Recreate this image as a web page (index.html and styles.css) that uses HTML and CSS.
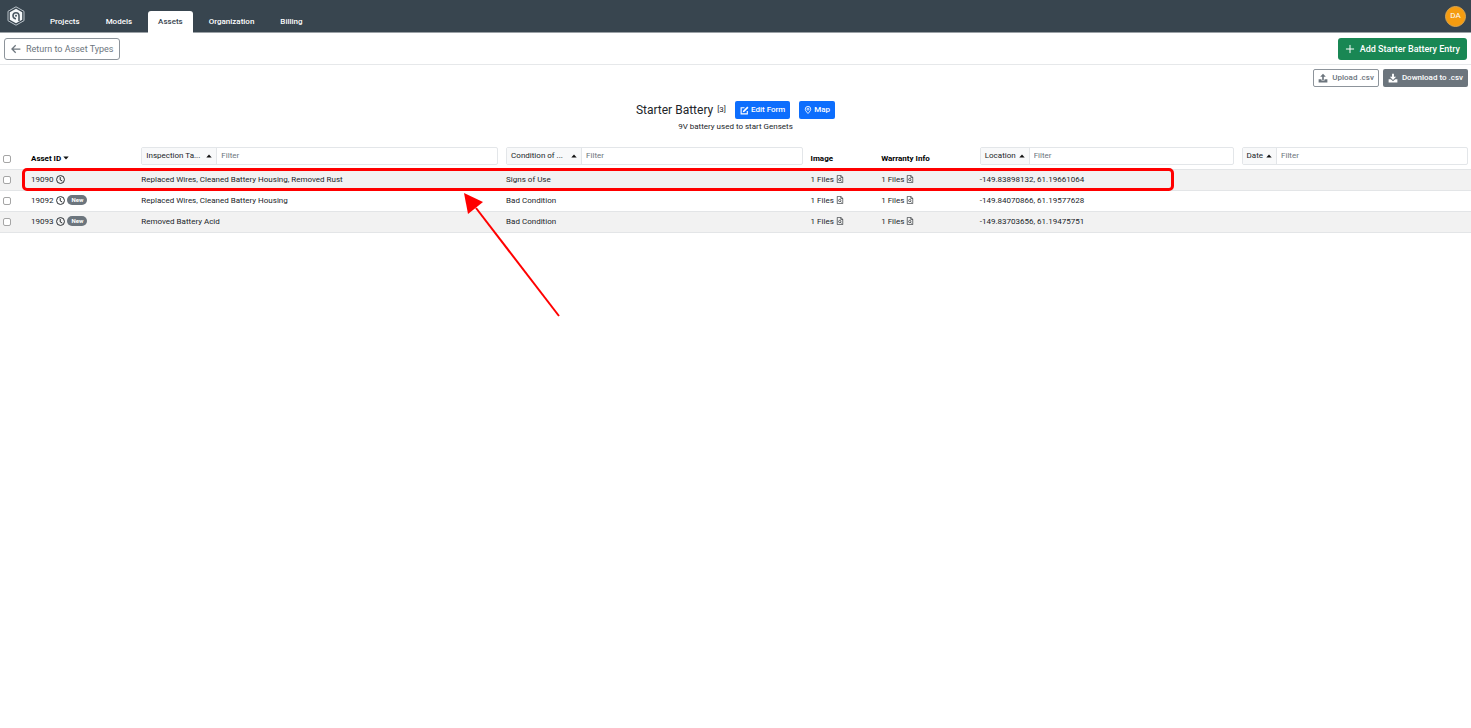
FILE: index.html
```html
<!DOCTYPE html>
<html lang="en">
<head>
<meta charset="utf-8">
<title>Starter Battery assets</title>
<link rel="stylesheet" href="styles.css">
</head>
<body>
<svg class="sprite" aria-hidden="true">
  <symbol id="clock" viewBox="0 0 16 16"><circle cx="8" cy="8" r="7" fill="none" stroke="currentColor" stroke-width="1.700"/><path d="M7.500 3.500v5.300l3.700 2" fill="none" stroke="currentColor" stroke-width="1.700"/></symbol>
  <symbol id="file" viewBox="0 0 16 16"><path fill="none" stroke="currentColor" stroke-width="1.300" d="M2.500.8h7L13.500 4.500v10.700h-11zM9.500.8v4h4"/><circle cx="7.500" cy="9" r="2.300" fill="none" stroke="currentColor" stroke-width="1.300"/><path stroke="currentColor" stroke-width="1.300" d="M9 10.700l2 2.300"/></symbol>
  <symbol id="up" viewBox="0 0 10 6"><path d="M5 .5 9.500 5.500H.5z"/></symbol>
  <symbol id="down" viewBox="0 0 10 6"><path d="M5 5.500 9.500.5H.5z"/></symbol>
</svg>
<header class="topbar">
  <a class="logo" href="#" aria-label="Home">
    <svg class="line" viewBox="0 0 20 20"><path d="M10 .8 18 5.300v9.400L10 19.200 2 14.700V5.300z" stroke="#b9c2c9" stroke-width="1"/><path d="M10 2.800 16.200 6.300v7.400L10 17.200l-6.200-3.500V6.300z" fill="#f5f8fa"/><path d="M13 15V9.800a3 3 0 1 0-3 3" stroke="#4a5863" stroke-width="1.600"/><circle cx="10" cy="9.800" r="1" fill="#4a5863"/></svg>
  </a>
  <nav class="tabs">
    <a class="tab" href="#">Projects</a>
    <a class="tab" href="#">Models</a>
    <a class="tab active" href="#" aria-current="page">Assets</a>
    <a class="tab" href="#">Organization</a>
    <a class="tab" href="#">Billing</a>
  </nav>
  <button class="avatar" type="button">DA</button>
</header>
<div class="actions">
  <button class="btn btn-lg btn-outline" type="button"><svg class="ico10 line" viewBox="0 0 16 16" stroke="currentColor" stroke-width="2"><path d="M15 8H2M7.500 2 1.500 8l6 6"/></svg>Return to Asset Types</button>
  <button class="btn btn-lg btn-green" type="button"><svg class="ico10 line" viewBox="0 0 16 16" stroke="currentColor" stroke-width="1.600"><path d="M8 1.500v13M1.500 8h13"/></svg>Add Starter Battery Entry</button>
</div>
<div class="csv">
  <button class="btn btn-outline" type="button"><svg class="ico10" viewBox="0 0 16 16"><path d="M8 1l4.500 4.800H9.300V11H6.700V5.800H3.500z"/><path d="M1 10h4.500v2h5v-2H15v5H1z"/></svg>Upload .csv</button>
  <button class="btn btn-grey" type="button"><svg class="ico10" viewBox="0 0 16 16"><path d="M6.500 1h3v5H13L8 11 3 6h3.500z"/><path d="M1 10h3.500L8 13l3.500-3H15v5H1z"/></svg>Download to .csv</button>
</div>
<section class="heading">
  <div class="title-row">
    <h1>Starter Battery</h1><span class="count">[3]</span>
    <button class="btn btn-blue" type="button"><svg class="ico9 line" viewBox="0 0 16 16" stroke="currentColor"><path stroke-width="2" d="M8 3H2v11h11V9"/><path stroke-width="3" d="M7 9 14 2"/><path fill="currentColor" stroke="none" d="M5 11l.6-3.500L8.500 10.400z"/></svg>Edit Form</button>
    <button class="btn btn-blue" type="button"><svg class="ico8 line" viewBox="0 0 16 16" stroke="currentColor" stroke-width="1.700"><path d="M8 15C4 10.500 2.500 8.500 2.500 6.300a5.500 5.500 0 0 1 11 0C13.500 8.500 12 10.500 8 15z"/><circle cx="8" cy="6.300" r="2"/></svg>Map</button>
  </div>
  <p>9V battery used to start Gensets</p>
</section>
<main class="grid">
<table>
  <colgroup><col class="c-check"><col class="c-id"><col class="c-tasks"><col class="c-cond"><col class="c-image"><col class="c-warranty"><col class="c-loc"><col class="c-date"></colgroup>
  <thead><tr>
    <th><input type="checkbox" aria-label="Select all"></th>
    <th>Asset ID <svg class="caret"><use href="#down"/></svg></th>
    <th><div class="filter"><button class="tag tag-wide" type="button">Inspection Ta... <svg class="caret"><use href="#up"/></svg></button><input type="text" placeholder="Filter" aria-label="Filter inspection tasks"></div></th>
    <th><div class="filter"><button class="tag tag-wide" type="button">Condition of ... <svg class="caret"><use href="#up"/></svg></button><input type="text" placeholder="Filter" aria-label="Filter condition"></div></th>
    <th>Image</th>
    <th>Warranty Info</th>
    <th><div class="filter"><button class="tag" type="button">Location <svg class="caret"><use href="#up"/></svg></button><input type="text" placeholder="Filter" aria-label="Filter location"></div></th>
    <th><div class="filter"><button class="tag" type="button">Date <svg class="caret"><use href="#up"/></svg></button><input type="text" placeholder="Filter" aria-label="Filter date"></div></th>
  </tr></thead>
  <tbody>
  <tr><td><input type="checkbox" aria-label="Select 19090"></td><td>19090 <svg class="mini clock"><use href="#clock"/></svg></td><td>Replaced Wires, Cleaned Battery Housing, Removed Rust</td><td>Signs of Use</td><td>1 Files <svg class="mini"><use href="#file"/></svg></td><td>1 Files <svg class="mini"><use href="#file"/></svg></td><td>-149.83898132, 61.19661064</td><td></td></tr>
  <tr><td><input type="checkbox" aria-label="Select 19092"></td><td>19092 <svg class="mini clock"><use href="#clock"/></svg> <span class="badge">New</span></td><td>Replaced Wires, Cleaned Battery Housing</td><td>Bad Condition</td><td>1 Files <svg class="mini"><use href="#file"/></svg></td><td>1 Files <svg class="mini"><use href="#file"/></svg></td><td>-149.84070866, 61.19577628</td><td></td></tr>
  <tr><td><input type="checkbox" aria-label="Select 19093"></td><td>19093 <svg class="mini clock"><use href="#clock"/></svg> <span class="badge">New</span></td><td>Removed Battery Acid</td><td>Bad Condition</td><td>1 Files <svg class="mini"><use href="#file"/></svg></td><td>1 Files <svg class="mini"><use href="#file"/></svg></td><td>-149.83703656, 61.19475751</td><td></td></tr>
  </tbody>
</table>
<div class="callout"></div>
<svg class="arrow" viewBox="0 0 96 124" aria-hidden="true"><path d="M95 123 12 15" stroke="#f00" stroke-width="2"/><path d="M0 0 19 9 4 21z" fill="#f00"/></svg>
</main>
</body>
</html>
```

FILE: styles.css
```css
* { box-sizing: border-box; }
body { margin: 0; min-height: 100vh; display: flex; flex-direction: column; background: #fff; color: #212529; font-family: Roboto, "Liberation Sans", sans-serif; font-size: 8px; line-height: 12px; }
button, input { font: inherit; color: inherit; margin: 0; }
button { cursor: pointer; }
svg { fill: currentColor; flex: none; }
.line { fill: none; }
.sprite { position: absolute; width: 0; height: 0; }

.topbar { display: flex; align-items: flex-end; height: 33px; background: #38454f; border-bottom: 1px solid #9ba1a6; padding-right: 5px; }
.logo { align-self: center; margin-left: 6px; width: 20px; height: 20px; }
.logo svg { display: block; width: 20px; height: 20px; }
.tabs { display: flex; gap: 6px; margin-left: 14px; margin-bottom: -1px; }
.tab { padding: 0 10px; height: 22px; line-height: 21px; font-weight: 500; color: #fff; text-decoration: none; border-radius: 3px 3px 0 0; }
.tab.active { background: #fff; color: #38454f; }
.avatar { margin-left: auto; align-self: center; width: 21px; height: 21px; padding: 0; border: 1px solid #d9a650; border-radius: 50%; background: #f59c10; color: #fff; }

.btn { display: inline-flex; align-items: center; gap: 4px; height: 18px; padding: 0 4px; border: 1px solid transparent; border-radius: 2px; font-weight: 500; color: #fff; white-space: nowrap; }
.btn-lg { gap: 5px; height: 22px; padding: 0 6px; font-size: 9px; font-weight: 400; border-radius: 3px; }
.btn-outline { background: #fff; color: #6c757d; border-color: #8d949b; }
.btn-green { background: #198754; font-weight: 500; }
.btn-grey { background: #6c757d; }
.btn-blue { background: #0d6efd; gap: 2px; }
.ico10 { width: 10px; height: 10px; }
.ico9 { width: 9px; height: 9px; }
.ico8 { width: 8px; height: 8px; }

.actions { display: flex; justify-content: space-between; align-items: center; height: 32px; padding: 0 4px; border-bottom: 1px solid #e6e8ea; }
.csv { display: flex; justify-content: flex-end; gap: 4px; padding: 4px 3px 0; }

.heading { padding-top: 14px; text-align: center; }
.title-row { display: flex; justify-content: center; align-items: center; gap: 9px; }
h1 { margin: 0 -5px 0 0; font-size: 12px; font-weight: 400; line-height: 18px; }
.heading p { margin: 2px 0 0; }

.grid { position: relative; flex: 1; margin-top: 12px; }
table { width: 100%; table-layout: fixed; border-collapse: collapse; }
.c-check { width: 27px; }
.c-id { width: 7.5%; }
.c-tasks { width: 24.8%; }
.c-cond { width: 20.7%; }
.c-image { width: 4.8%; }
.c-warranty { width: 6.7%; }
.c-loc { width: 17.8%; }
th, td { height: 21px; padding: 0 4px; text-align: left; vertical-align: middle; white-space: nowrap; border-bottom: 1px solid #e3e5e7; }
th { height: 24px; padding-bottom: 4px; font-weight: 700; color: #000; vertical-align: bottom; }
th:first-child, td:first-child { padding-left: 3px; }
th:last-child { padding-right: 3px; }
th:first-child { padding-bottom: 6px; }
tbody tr:nth-child(odd) { background: #f2f2f2; }
input[type="checkbox"] { appearance: none; display: block; width: 8px; height: 8px; border: 1px solid #a5a5a5; border-radius: 2px; background: #fff; }
.filter { display: flex; height: 18px; border: 1px solid #e3e6e9; border-radius: 2px; font-weight: 400; }
.tag { display: flex; align-items: center; justify-content: space-between; gap: 3px; padding: 0 4px; background: #f8f9fa; color: #212529; border: 0; border-right: 1px solid #e3e6e9; }
.tag-wide { width: 75px; }
.filter input { flex: 1; min-width: 0; padding: 0 4px; border: 0; background: none; }
.filter input::placeholder { color: #6c757d; opacity: 1; }
.caret { width: 6px; height: 4px; color: #111; vertical-align: middle; }
.mini { width: 8px; height: 8px; vertical-align: -1px; }
.clock { width: 9px; height: 9px; margin-left: 1px; vertical-align: -2px; }
.badge { display: inline-block; padding: 0 4px; border-radius: 5px; background: #6c757d; color: #fff; font-size: 6px; font-weight: 700; line-height: 10px; vertical-align: middle; }

.callout { position: absolute; left: 22px; top: 23px; width: 78.3%; height: 23px; border: 3px solid #f00; border-radius: 5px; }
.arrow { position: absolute; left: 464px; top: 48px; width: 96px; height: 124px; }
```
